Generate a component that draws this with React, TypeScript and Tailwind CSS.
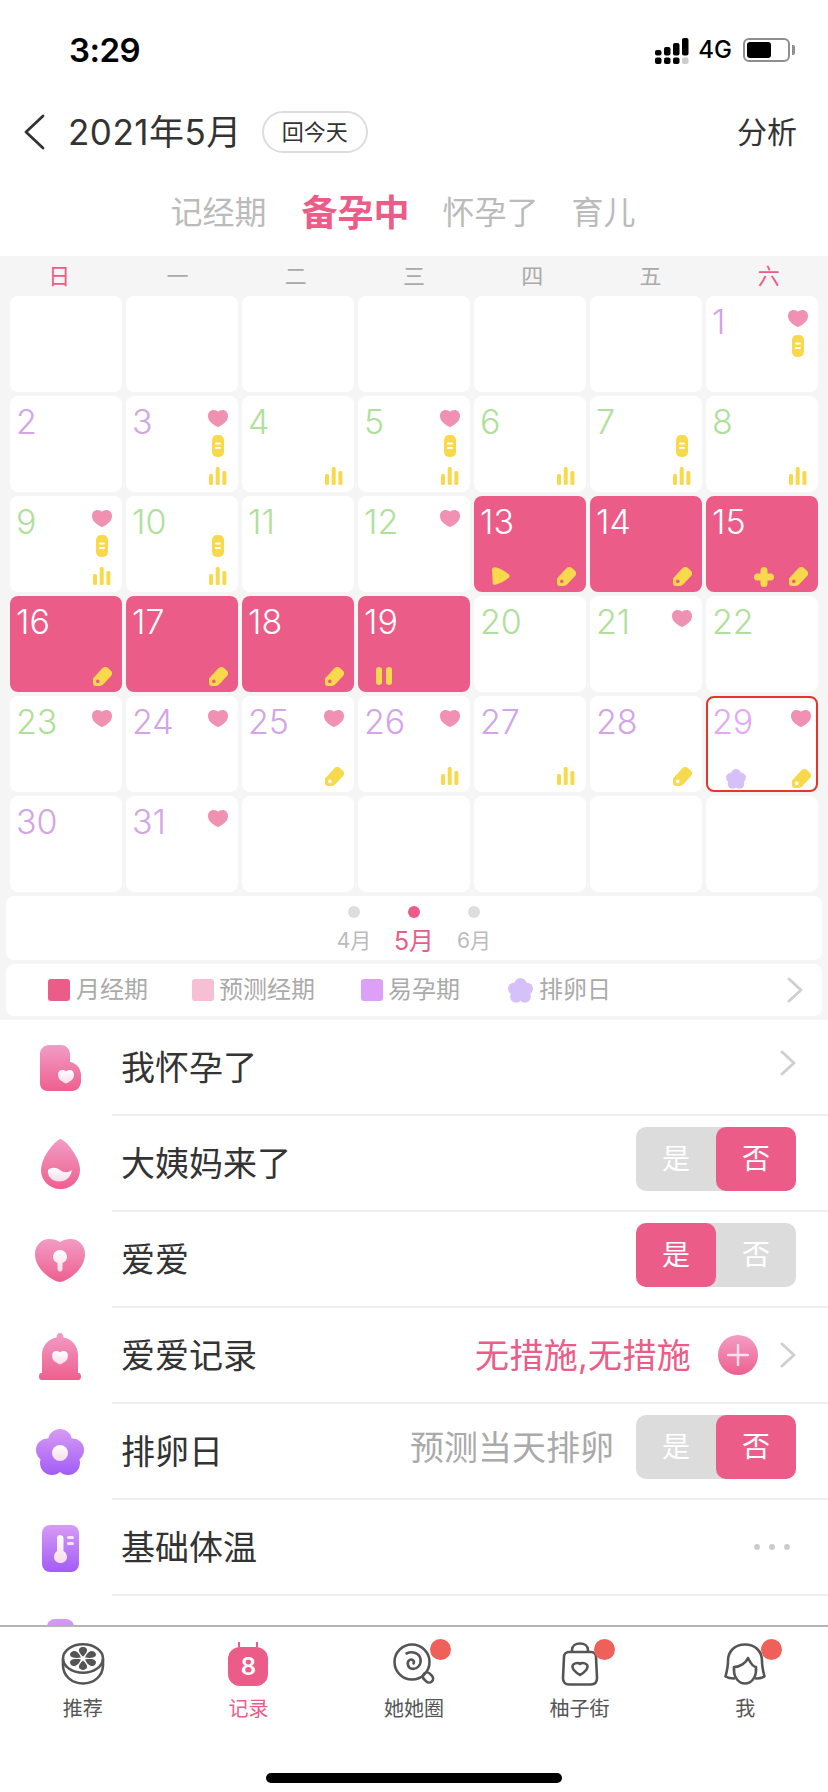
import { useId } from 'react';

type Day = {
  n?: number;
  color?: string;
  heart?: boolean;
  pill?: boolean;
  bottom?: 'bars' | 'tag';
  extra?: 'play' | 'plus' | 'pause' | 'flower';
  period?: boolean;
  today?: boolean;
};

const PURPLE = 'text-[#d3a4e8]';
const GREEN = 'text-[#afe09a]';
const WHITE = 'text-white';

const days: Day[] = [
  {}, {}, {}, {}, {}, {},
  { n: 1, color: PURPLE, heart: true, pill: true },
  { n: 2, color: PURPLE },
  { n: 3, color: PURPLE, heart: true, pill: true, bottom: 'bars' },
  { n: 4, color: GREEN, bottom: 'bars' },
  { n: 5, color: GREEN, heart: true, pill: true, bottom: 'bars' },
  { n: 6, color: GREEN, bottom: 'bars' },
  { n: 7, color: GREEN, pill: true, bottom: 'bars' },
  { n: 8, color: GREEN, bottom: 'bars' },
  { n: 9, color: GREEN, heart: true, pill: true, bottom: 'bars' },
  { n: 10, color: GREEN, pill: true, bottom: 'bars' },
  { n: 11, color: GREEN },
  { n: 12, color: GREEN, heart: true },
  { n: 13, color: WHITE, period: true, bottom: 'tag', extra: 'play' },
  { n: 14, color: WHITE, period: true, bottom: 'tag' },
  { n: 15, color: WHITE, period: true, bottom: 'tag', extra: 'plus' },
  { n: 16, color: WHITE, period: true, bottom: 'tag' },
  { n: 17, color: WHITE, period: true, bottom: 'tag' },
  { n: 18, color: WHITE, period: true, bottom: 'tag' },
  { n: 19, color: WHITE, period: true, extra: 'pause' },
  { n: 20, color: GREEN },
  { n: 21, color: GREEN, heart: true },
  { n: 22, color: GREEN },
  { n: 23, color: GREEN, heart: true },
  { n: 24, color: PURPLE, heart: true },
  { n: 25, color: PURPLE, heart: true, bottom: 'tag' },
  { n: 26, color: PURPLE, heart: true, bottom: 'bars' },
  { n: 27, color: PURPLE, bottom: 'bars' },
  { n: 28, color: PURPLE, bottom: 'tag' },
  { n: 29, color: 'text-[#e2a9f7]', heart: true, bottom: 'tag', extra: 'flower', today: true },
  { n: 30, color: PURPLE },
  { n: 31, color: PURPLE, heart: true },
  {}, {}, {}, {}, {},
];

const weekdays = ['日', '一', '二', '三', '四', '五', '六'];

const HEART = 'M10 17C9 17 7.5 16 5.5 14.5C2.5 12.5 0 10 0 5.8C0 2.4 2.5 0 5.4 0C7.3 0 9 .7 10 1.8C11 .7 12.7 0 14.6 0C17.5 0 20 2.4 20 5.8C20 10 17.5 12.5 14.5 14.5C12.5 16 11 17 10 17Z';
const YELLOW = '#f8d94c';

const Heart = () => (
  <svg width="20" height="17" viewBox="0 0 20 17">
    <path d={HEART} fill="#f191b2" />
  </svg>
);

const Pill = () => (
  <svg width="12" height="22" viewBox="0 0 12 22">
    <rect width="12" height="22" rx="5" fill={YELLOW} />
    <rect x="3" y="7.5" width="6" height="2" rx="1" fill="#fff" />
    <rect x="3" y="12" width="6" height="2" rx="1" fill="#fff" />
  </svg>
);

const Bars = () => (
  <svg width="18" height="18" viewBox="0 0 18 18">
    <rect x="0" y="7" width="4" height="11" rx="1.5" fill={YELLOW} />
    <rect x="6.7" y="0" width="4" height="18" rx="1.5" fill={YELLOW} />
    <rect x="13.4" y="4" width="4" height="14" rx="1.5" fill={YELLOW} />
  </svg>
);

const Tag = ({ hole }: { hole: string }) => (
  <svg width="19" height="19" viewBox="0 0 19 19">
    <path
      d="M1.5 12L10.5 2.3C11.5 1.300 13 1.300 14 2.200L16.9 4.900C17.800 5.800 17.800 7 16.900 8L9 16.500C8.400 17.100 7.700 17.400 7 17.400H3C2 17.400 1.500 16.900 1.500 16Z"
      fill={YELLOW}
      stroke={YELLOW}
      strokeWidth="3"
      strokeLinejoin="round"
    />
    <circle cx="4.8" cy="14.4" r="1.8" fill={hole} />
  </svg>
);

const Play = () => (
  <svg width="18" height="18" viewBox="0 0 18 18">
    <path d="M0 3C0 .8 1.5-.2 3.5.3C8 1.5 12 3.5 16 6.7C18.200 8.300 18.200 9.700 16 11.300C12 14.500 8 16.500 3.500 17.700C1.500 18.200.7 17.300.6 15.500C.8 11 .2 7 0 3Z" fill={YELLOW} />
  </svg>
);

const Plus = () => (
  <svg width="20" height="20" viewBox="0 0 20 20">
    <rect x="6.5" y="0" width="7" height="20" rx="3.5" fill={YELLOW} />
    <rect x="0" y="6.5" width="20" height="7" rx="3.5" fill={YELLOW} />
  </svg>
);

const Pause = () => (
  <svg width="16" height="18" viewBox="0 0 16 18">
    <rect x="0" width="6" height="18" rx="3" fill={YELLOW} />
    <rect x="10" width="6" height="18" rx="3" fill={YELLOW} />
  </svg>
);

const SmallFlower = ({ size = 20, fill = '#d6c0fa' }: { size?: number; fill?: string }) => (
  <svg width={size} height={size} viewBox="0 0 20 20">
    <circle cx="10" cy="5" r="5" fill={fill} />
    <circle cx="4.8" cy="8.6" r="4.8" fill={fill} />
    <circle cx="15.2" cy="8.6" r="4.8" fill={fill} />
    <circle cx="6.5" cy="15" r="4.8" fill={fill} />
    <circle cx="13.5" cy="15" r="4.8" fill={fill} />
    <circle cx="10" cy="10" r="5" fill={fill} />
  </svg>
);

const DayCell = ({ day }: { day: Day }) => (
  <div
    className={`grid h-[96px] grid-cols-[72px_40px] grid-rows-[39px_32px_25px] rounded-[8px] ${
      day.period ? 'bg-[#ec5c88]' : 'bg-white'
    } ${day.today ? 'border-[2.5px] border-[#e8352a]' : ''}`}
  >
    <div className={`pl-[6px] pt-[6px] text-[34px] leading-[40px] font-light ${day.color ?? ''} ${day.today ? '-ml-[2px] -mt-[2px]' : ''}`}>
      {day.n}
    </div>
    <div className={`flex items-start justify-center pt-[14px] ${day.today ? '-mr-[2px] -mt-[2px]' : ''}`}>{day.heart && <Heart />}</div>
    <div />
    <div className={`flex items-start justify-center ${day.today ? '-mr-[2px]' : ''}`}>{day.pill && <Pill />}</div>
    <div className={`flex items-start ${day.extra === 'plus' ? 'justify-end pr-[4px]' : 'justify-start pl-[18px]'} ${day.extra === 'flower' ? 'pl-[14px]' : ''}`}>
      {day.extra === 'play' && <Play />}
      {day.extra === 'plus' && <Plus />}
      {day.extra === 'pause' && <Pause />}
      {day.extra === 'flower' && <SmallFlower />}
    </div>
    <div className={`flex items-start justify-center ${day.today ? '-mr-[2px]' : ''}`}>
      {day.bottom === 'bars' && <Bars />}
      {day.bottom === 'tag' && <Tag hole={day.period ? '#ec5c88' : '#ffffff'} />}
    </div>
  </div>
);

const Chevron = ({ className }: { className: string }) => (
  <svg className={className} width="16" height="26" viewBox="0 0 16 26" fill="none">
    <path d="M2 2L14 13L2 24" stroke="#d0d0d0" strokeWidth="3" strokeLinecap="round" strokeLinejoin="round" />
  </svg>
);

const PINK_FROM = '#f29cc6';
const PINK_TO = '#ee5f8d';
const VIOLET_FROM = '#d79bf5';
const VIOLET_TO = '#a25cf6';

const Gradients = ({ id, h, from, to }: { id: string; h: number; from: string; to: string }) => (
  <defs>
    <linearGradient id={`${id}a`} x1="0" y1="0" x2="0" y2={h} gradientUnits="userSpaceOnUse">
      <stop offset="0" stopColor={from} />
      <stop offset="1" stopColor={to} />
    </linearGradient>
    <linearGradient id={`${id}b`} x1="0" y1="0" x2="0" y2="1">
      <stop offset="0" stopColor="#ffffff" />
      <stop offset="1" stopColor="#f6dcea" />
    </linearGradient>
  </defs>
);

const PregnantIcon = () => {
  const id = useId();
  return (
    <svg width="41" height="46" viewBox="0 0 41 46">
      <Gradients id={id} h={46} from={PINK_FROM} to={PINK_TO} />
      <path d="M9 0H21C26 0 30 4 30 9V17C36 18 41 23 41 30V36C41 42 37 46 32 46H8C3 46 0 43 0 38V9C0 4 4 0 9 0Z" fill={`url(#${id}a)`} />
      <path transform="translate(18 25) scale(.8)" d={HEART} fill={`url(#${id}b)`} />
    </svg>
  );
};

const DropIcon = () => {
  const id = useId();
  return (
    <svg width="39" height="50" viewBox="0 0 39 50">
      <Gradients id={id} h={50} from={PINK_FROM} to={PINK_TO} />
      <path d="M19.5 0C23 0 39 17 39 31C39 42 30 50 19.5 50C9 50 0 42 0 31C0 17 16 0 19.5 0Z" fill={`url(#${id}a)`} />
      <path d="M7 31C10 28 15 28 19 31C23 34 27 34 31 31C30 38 25 42.5 18 42.5C11 42.5 6 37 7 31Z" fill={`url(#${id}b)`} />
    </svg>
  );
};

const LoveIcon = () => {
  const id = useId();
  return (
    <svg width="50" height="43" viewBox="0 0 50 43">
      <Gradients id={id} h={43} from={PINK_FROM} to={PINK_TO} />
      <path d="M25 43C20 43 0 32 0 15C0 6 7 0 14 0C19 0 22 1 25 3C28 1 31 0 36 0C43 0 50 6 50 15C50 32 30 43 25 43Z" fill={`url(#${id}a)`} />
      <path d="M25 11C29 11 32 14 32 18C32 21 30 23 27.5 24V30C27.5 31.5 26.5 32.5 25 32.5C23.5 32.5 22.5 31.5 22.5 30V24C20 23 18 21 18 18C18 14 21 11 25 11Z" fill={`url(#${id}b)`} />
    </svg>
  );
};

const CondomIcon = () => {
  const id = useId();
  return (
    <svg width="42" height="47" viewBox="0 0 42 47">
      <Gradients id={id} h={47} from={PINK_FROM} to={PINK_TO} />
      <path d="M21 0C23 0 24.5 1.5 24.5 4.5C33 6 39 13 39 22V40H39.5C41 40 42 41 42 43.5C42 46 41 47 39.5 47H2.5C1 47 0 46 0 43.5C0 41 1 40 2.5 40H3V22C3 13 9 6 17.5 4.5C17.5 1.5 19 0 21 0Z" fill={`url(#${id}a)`} />
      <path transform="translate(13 18) scale(.8)" d={HEART} fill={`url(#${id}b)`} />
    </svg>
  );
};

const OvulationIcon = () => {
  const id = useId();
  const fill = `url(#${id}a)`;
  return (
    <svg width="48" height="46" viewBox="0 0 48 46">
      <Gradients id={id} h={46} from={VIOLET_FROM} to={VIOLET_TO} />
      <circle cx="24" cy="12" r="12" fill={fill} />
      <circle cx="11.5" cy="21" r="11.5" fill={fill} />
      <circle cx="36.5" cy="21" r="11.5" fill={fill} />
      <circle cx="16" cy="34" r="12" fill={fill} />
      <circle cx="32" cy="34" r="12" fill={fill} />
      <circle cx="24" cy="24" r="10" fill={fill} />
      <circle cx="24" cy="24" r="8" fill={`url(#${id}b)`} />
    </svg>
  );
};

const ThermoIcon = () => {
  const id = useId();
  return (
    <svg width="37" height="47" viewBox="0 0 37 47">
      <Gradients id={id} h={47} from={VIOLET_FROM} to={VIOLET_TO} />
      <rect width="37" height="47" rx="8" fill={`url(#${id}a)`} />
      <path d="M18 10C20 10 21.5 11.5 21.5 13.5V26C24 27.5 25 29.5 25 32C25 35.5 22 38 18.5 38C15 38 12 35.5 12 32C12 29.5 13 27.5 15 26V13C15 11.5 16 10 18 10Z" fill={`url(#${id}b)`} />
      <rect x="25" y="11" width="7" height="3" rx="1.5" fill="#f4e6fb" />
      <rect x="25" y="17" width="7" height="3" rx="1.5" fill="#f4e6fb" />
    </svg>
  );
};

const PartialIcon = () => {
  const id = useId();
  return (
    <svg width="27" height="47" viewBox="0 0 27 47">
      <Gradients id={id} h={47} from={VIOLET_FROM} to={VIOLET_TO} />
      <rect width="27" height="47" rx="8" fill={`url(#${id}a)`} />
    </svg>
  );
};

const Toggle = ({ yes }: { yes: boolean }) => (
  <div className="mb-[8px] flex h-[64px] w-[160px] rounded-[10px] bg-[#dcdcdc] text-[28px] text-white">
    <div className={`flex w-[80px] items-center justify-center rounded-[10px] ${yes ? 'bg-[#ec5c88]' : ''}`}>是</div>
    <div className={`flex w-[80px] items-center justify-center rounded-[10px] ${yes ? '' : 'bg-[#ec5c88]'}`}>否</div>
  </div>
);

const Row = ({ icon, label, children }: { icon: React.ReactNode; label: string; children?: React.ReactNode }) => (
  <div className="flex h-[96px]">
    <div className="flex w-[112px] shrink-0 items-center">
      <div className="flex w-[120px] shrink-0 justify-center">{icon}</div>
    </div>
    <div className="flex min-w-0 flex-1 items-center justify-between border-b-2 border-[#eeeeee] pl-[9px] pr-[32px]">
      <span className="text-[34px] text-[#333333]">{label}</span>
      <div className="flex items-center">{children}</div>
    </div>
  </div>
);

const FruitTab = () => (
  <svg width="44" height="42" viewBox="0 0 44 42" fill="none" stroke="#555555" strokeWidth="2.6">
    <path d="M2 16V22C2 33 11 40.5 22 40.5C33 40.5 42 33 42 22V16" />
    <ellipse cx="22" cy="15.5" rx="20" ry="14.2" />
    <g fill="#555555" stroke="none" transform="translate(22 15.5) scale(1 .8)">
      {[0, 60, 120, 180, 240, 300].map((a) => (
        <path key={a} d="M0 -2.5C2 -4.5 5 -9 3.8 -12C2.600 -15 -2.600 -15 -3.800 -12C-5 -9 -2 -4.500 0 -2.500Z" transform={`rotate(${a})`} />
      ))}
    </g>
  </svg>
);

const CalendarTab = () => (
  <div className="flex h-[44px] w-[40px] flex-col items-center">
    <div className="flex h-[5px] w-[20px] justify-between">
      <div className="h-[5px] w-[2px] bg-[#ec5c88]" />
      <div className="h-[5px] w-[2px] bg-[#ec5c88]" />
    </div>
    <div className="flex h-[39px] w-[40px] items-center justify-center rounded-[12px] bg-[#ec5c88] text-[24px] font-semibold leading-none text-white">
      8
    </div>
  </div>
);

const LollipopTab = () => (
  <svg width="42" height="42" viewBox="0 0 42 42" fill="none" stroke="#555555" strokeWidth="2.6" strokeLinecap="round">
    <circle cx="19" cy="19" r="17.5" />
    <path d="M20.500 20.500C22 18 19 15.500 16.500 17C13.500 19 14.500 25 19 25.800C24.500 26.500 28.500 21.500 27.500 16C26.500 10.500 19.500 7.500 13.500 10.500" />
    <rect x="31" y="29" width="8" height="11" rx="4" transform="rotate(-45 35 34.5)" />
  </svg>
);

const BagTab = () => (
  <svg width="38" height="44" viewBox="0 0 38 44" fill="none" stroke="#555555" strokeWidth="2.6" strokeLinejoin="round">
    <path d="M8 10H30C33 10 35 12 35 15L36 36C36 40 34 42.5 30 42.5H8C4 42.5 2 40 2 36L3 15C3 12 5 10 8 10Z" />
    <path d="M11 10V8C11 4 14.5 1.5 19 1.5C23.5 1.5 27 4 27 8V10" />
    <path d="M19 33C14 30 11.5 27.5 11.5 24.5C11.5 21.5 16.5 20 19 22C21.5 20 26.5 21.5 26.5 24.5C26.5 27.5 24 30 19 33Z" />
  </svg>
);

const GirlTab = () => (
  <svg width="42" height="42" viewBox="0 0 42 42" fill="none" stroke="#555555" strokeWidth="2.6" strokeLinecap="round" strokeLinejoin="round">
    <path d="M10 27V24C16 24 22 20 24 15C26 19 29 24 32 24V27" />
    <path d="M10 27C10 35 15 40.5 21 40.5C27 40.5 32 35 32 27" />
    <path d="M10 35.5C7 35.5 4 35 1.5 33.5C3 28 4 23 4 18C4 8 11 1.5 21 1.5C31 1.5 38 8 38 18C38 23 39 28 40.5 33.5C38 35 35 35.5 32 35.5" />
  </svg>
);

const tabs = [
  { label: '推荐', icon: <FruitTab /> },
  { label: '记录', icon: <CalendarTab />, active: true },
  { label: '她她圈', icon: <LollipopTab />, dot: true },
  { label: '柚子街', icon: <BagTab />, dot: true },
  { label: '我', icon: <GirlTab />, dot: true },
];

export default function App() {
  return (
    <div className="flex h-[1792px] w-[828px] flex-col overflow-hidden bg-white font-['Inter','Noto_Sans_CJK_SC',sans-serif] text-[#333333]">
      {/* status bar */}
      <div className="flex h-[100px] shrink-0 items-center justify-between pl-[69px] pr-[33px]">
        <span className="text-[33px] font-semibold leading-none tracking-[-0.5px] text-black">3:29</span>
        <div className="flex items-center">
          <svg className="mt-[2px] mr-[-2px]" width="34" height="26" viewBox="0 0 34 26" fill="#000">
            <rect x="0" y="12" width="6.5" height="5.5" rx="2" />
            <rect x="9" y="9" width="6.5" height="8.5" rx="2" />
            <rect x="18" y="5" width="6.5" height="12.5" rx="2" />
            <rect x="27" y="0" width="6.5" height="17.5" rx="2" />
            <rect x="0" y="19.5" width="6.5" height="6.5" rx="2" />
            <rect x="9" y="19.5" width="6.5" height="6.5" rx="2" />
            <rect x="18" y="19.5" width="6.5" height="6.5" rx="2" />
            <rect x="27" y="19.5" width="6.5" height="6.5" rx="2" fill="#cccccc" />
          </svg>
          <span className="ml-[11px] text-[24px] font-medium leading-none text-black">4G</span>
          <div className="ml-[11px] flex h-[24px] w-[47px] items-center rounded-[6px] border-2 border-[#8e8e8e] pl-[2px]">
            <div className="h-[16px] w-[24px] rounded-[3px] bg-black" />
          </div>
          <div className="ml-[2px] h-[10px] w-[3px] rounded-r-[2px] bg-[#8e8e8e]" />
        </div>
      </div>

      {/* title */}
      <div className="flex h-[64px] shrink-0 items-center pl-[24px] pr-[31px]">
        <svg width="21" height="36" viewBox="0 0 21 36" fill="none">
          <path d="M19 2L2 18L19 34" stroke="#333333" strokeWidth="2.8" strokeLinecap="round" strokeLinejoin="round" />
        </svg>
        <span className="ml-[23px] text-[35px] tracking-[0.5px]">2021年5月</span>
        <div className="ml-[20px] flex h-[42px] w-[106px] items-center justify-center rounded-full border-2 border-[#dddddd] text-[22px]">
          回今天
        </div>
        <span className="ml-auto text-[30px]">分析</span>
      </div>

      {/* mode tabs */}
      <div className="flex h-[92px] shrink-0 items-center justify-center gap-[35px] pr-[22px] pt-[6px] text-[32px] text-[#bbbbbb]">
        <span>记经期</span>
        <span className="text-[36px] font-bold text-[#ec5c88]">备孕中</span>
        <span className="-ml-[2px]">怀孕了</span>
        <span className="-ml-[2px]">育儿</span>
      </div>

      {/* calendar */}
      <div className="h-[764px] shrink-0 bg-[#f5f5f5]">
        <div className="grid h-[40px] grid-cols-7 items-center text-center text-[22px] text-[#aaaaaa]">
          {weekdays.map((w, i) => (
            <span key={w} className={i === 0 || i === 6 ? 'text-[#ec5c88]' : ''}>
              {w}
            </span>
          ))}
        </div>
        <div className="grid grid-cols-[repeat(7,112px)] gap-[4px] px-[10px]">
          {days.map((d, i) => (
            <DayCell key={i} day={d} />
          ))}
        </div>
        <div className="mx-[6px] mt-[4px] flex h-[64px] justify-center rounded-[8px] bg-white pt-[10px] text-[21px] text-[#bbbbbb]">
          <div className="flex w-[60px] flex-col items-center">
            <div className="h-[12px] w-[12px] rounded-full bg-[#dddddd]" />
            <span className="mt-[8px] leading-[30px]">4月</span>
          </div>
          <div className="flex w-[60px] flex-col items-center text-[#ec5c88]">
            <div className="h-[12px] w-[12px] rounded-full bg-[#ec5c88]" />
            <span className="mt-[8px] text-[25px] leading-[30px]">5月</span>
          </div>
          <div className="flex w-[60px] flex-col items-center">
            <div className="h-[12px] w-[12px] rounded-full bg-[#dddddd]" />
            <span className="mt-[8px] leading-[30px]">6月</span>
          </div>
        </div>
        <div className="mx-[6px] mt-[4px] flex h-[52px] items-center rounded-[8px] bg-white pl-[42px] pr-[19px] text-[24px] text-[#aaaaaa]">
          <div className="h-[22px] w-[22px] rounded-[3px] bg-[#ec5c88]" />
          <span className="ml-[6px]">月经期</span>
          <div className="ml-[44px] h-[22px] w-[22px] rounded-[3px] bg-[#f7bfd4]" />
          <span className="ml-[5px]">预测经期</span>
          <div className="ml-[46px] h-[22px] w-[22px] rounded-[3px] bg-[#dca0f8]" />
          <span className="ml-[5px]">易孕期</span>
          <div className="ml-[48px]">
            <SmallFlower size={25} />
          </div>
          <span className="ml-[6px]">排卵日</span>
          <Chevron className="ml-auto" />
        </div>
      </div>

      {/* records list */}
      <div className="min-h-0 flex-1 overflow-hidden">
        <Row icon={<PregnantIcon />} label="我怀孕了">
          <Chevron className="mb-[8px]" />
        </Row>
        <Row icon={<DropIcon />} label="大姨妈来了">
          <Toggle yes={false} />
        </Row>
        <Row icon={<LoveIcon />} label="爱爱">
          <Toggle yes />
        </Row>
        <Row icon={<CondomIcon />} label="爱爱记录">
          <span className="text-[34px] tracking-[0.3px] text-[#ec5c88]">无措施,无措施</span>
          <div className="ml-[27px] flex h-[40px] w-[40px] items-center justify-center rounded-full bg-linear-to-b from-[#f29cc6] to-[#ee5f8d]">
            <svg width="22" height="22" viewBox="0 0 22 22">
              <path d="M11 1V21M1 11H21" stroke="#f8dfea" strokeWidth="2.5" strokeLinecap="round" />
            </svg>
          </div>
          <Chevron className="ml-[22px]" />
        </Row>
        <Row icon={<OvulationIcon />} label="排卵日">
          <span className="mb-[8px] mr-[22px] text-[34px] text-[#aaaaaa]">预测当天排卵</span>
          <Toggle yes={false} />
        </Row>
        <Row icon={<ThermoIcon />} label="基础体温">
          <div className="mr-[6px] flex gap-[9px]">
            <div className="h-[6px] w-[6px] rounded-full bg-[#cccccc]" />
            <div className="h-[6px] w-[6px] rounded-full bg-[#cccccc]" />
            <div className="h-[6px] w-[6px] rounded-full bg-[#cccccc]" />
          </div>
        </Row>
        <div className="flex w-[120px] justify-center pt-[23px]">
          <PartialIcon />
        </div>
      </div>

      {/* tab bar */}
      <div className="flex h-[167px] shrink-0 flex-col border-t-2 border-[#b4b4b4] bg-white">
        <div className="grid grid-cols-5 pt-[15px]">
          {tabs.map((t) => (
            <div key={t.label} className="flex flex-col items-center">
              <div className="relative flex h-[44px] items-center">
                {t.icon}
                {t.dot && <div className="absolute -right-[16px] -top-[3px] h-[21px] w-[21px] rounded-full bg-[#f0605a]" />}
              </div>
              <span className={`mt-[6px] text-[20px] leading-[34px] ${t.active ? 'text-[#ec5c88]' : 'text-[#555555]'}`}>{t.label}</span>
            </div>
          ))}
        </div>
        <div className="mt-[47px] flex justify-center">
          <div className="h-[10px] w-[296px] rounded-full bg-black" />
        </div>
      </div>
    </div>
  );
}
